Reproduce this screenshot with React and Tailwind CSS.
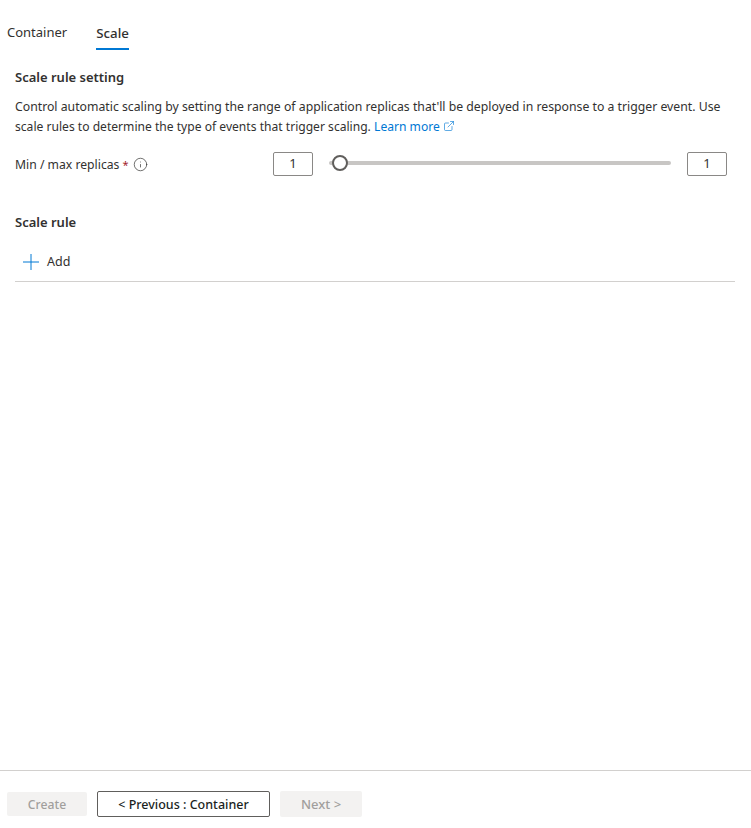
import { Info, ExternalLink } from 'lucide-react';

function NumBox({ value }) {
  return (
    <div className="w-10 h-6 flex items-center justify-center border border-[#8a8886] rounded-[2px] text-[13px] text-[#323130] bg-white">
      {value}
    </div>
  );
}

export default function App() {
  return (
    <div className="w-[751px] h-[828px] flex flex-col bg-white font-['Noto_Sans',sans-serif] text-[13px] text-[#323130] overflow-hidden">
      <div className="flex-1">
        <div className="flex items-start pl-[7px] pt-[24px] h-[50px] gap-[29px]">
          <div className="text-[13px] leading-[17px]">Container</div>
          <div className="font-medium text-[13.3px] leading-[18px] border-b-2 border-[#0078d4] h-[26px]">Scale</div>
        </div>
        <div className="pl-[15px] pr-[16px] pt-[18px]">
          <h2 className="text-[13px] font-semibold leading-[18px]">Scale rule setting</h2>
          <p className="mt-[11px] text-[12.25px] leading-[20px]">
            Control automatic scaling by setting the range of application replicas that'll be deployed in response to a trigger event. Use<br />
            <span className="text-[12.1px]">scale rules to determine the type of events that trigger scaling.</span>{' '}
            <a className="text-[#0078d4] text-[12.1px]">
              Learn more <ExternalLink size={12} strokeWidth={1.25} className="inline align-[-1px]" />
            </a>
          </p>
          <div className="flex items-center mt-[15px] h-6">
            <div className="w-[258px] flex items-center gap-[4px] mt-[2px]">
              <span className="text-[12.2px]">Min / max replicas <span className="text-[#a4262c] text-[11px]">*</span></span>
              <Info size={15} strokeWidth={1.1} />
            </div>
            <NumBox value="1" />
            <div className="relative flex-1 h-1 ml-4 mr-4 mb-[2px] rounded-full bg-[#c8c6c4]">
              <div className="absolute left-[3px] top-1/2 -translate-y-1/2 w-4 h-4 rounded-full border-2 border-[#605e5c] bg-white" />
            </div>
            <NumBox value="1" />
            <div className="w-2 shrink-0" />
          </div>
          <h2 className="mt-[37px] text-[13px] font-semibold leading-[18px]">Scale rule</h2>
          <div className="flex items-center h-[43px] mt-[8px] pl-[8px] pt-[3px] gap-[8px] border-b border-[#d2d0ce]">
            <svg width="16" height="16" viewBox="0 0 16 16" fill="none" stroke="#0078d4" strokeWidth="1">
              <path d="M0 8h16M8 0v16" />
            </svg>
            <span className="text-[12.5px] mt-[1px]">Add</span>
          </div>
        </div>
      </div>
      <div className="h-[58px] border-t border-[#d2d0ce] flex items-center pl-[7px] pt-[9px] gap-[10px]">
        <button className="w-20 h-6 pt-[2px] bg-[#f3f2f1] text-[#a19f9d] font-medium text-[12.2px] rounded-[2px]">Create</button>
        <button className="w-[173px] h-[26px] pt-[2px] border border-[#605e5c] rounded-[2px] text-[#201f1e] font-medium text-[12.5px] bg-white">&lt; Previous : Container</button>
        <button className="w-[82px] h-[26px] pt-[2px] bg-[#f3f2f1] text-[#a19f9d] font-medium text-[13px] rounded-[2px]">Next &gt;</button>
      </div>
    </div>
  );
}
